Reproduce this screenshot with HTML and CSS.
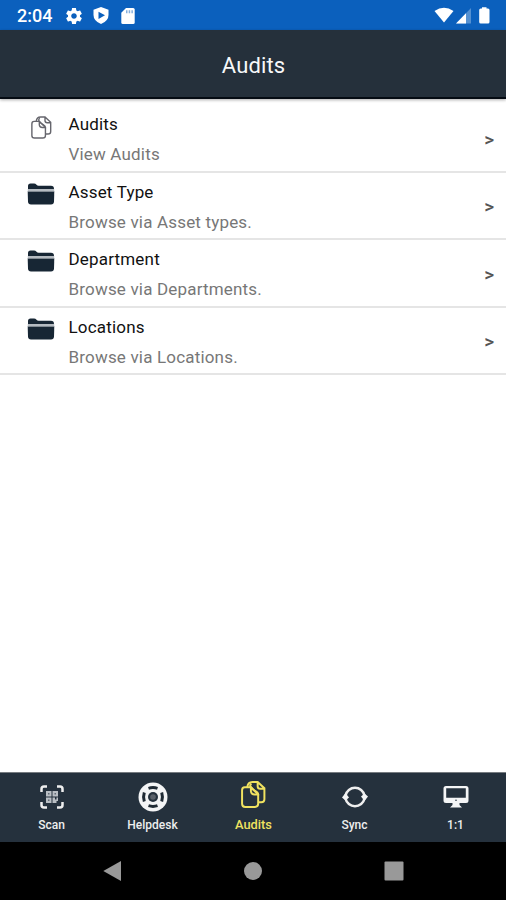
FILE: index.html
```html
<!DOCTYPE html>
<html lang="en">
<head>
<meta charset="utf-8">
<title>Audits</title>
<link rel="stylesheet" href="styles.css">
</head>
<body>
<svg class="defs" width="0" height="0" aria-hidden="true">
  <symbol id="pages" viewBox="0 0 24 26">
    <path d="M6 6 Q6.500 1 11 1 H16 L22.500 7 V17.500 Q22.500 20.500 19.500 20.500 H17 M16 1.500 V5 Q16 7.500 18.500 7.500 H22"/>
    <path d="M3.500 6 H9.500 L16.500 13 V22 Q16.500 25 13.500 25 H4 Q1 25 1 22 V9 Q1 6 3.500 6 Z"/>
    <path d="M9.500 6 Q8 4 10 2.500 M9.500 6 V10 Q10 13 13 13 H16.500 Q16.500 11 13.500 9.500 Q11.500 8.500 9.500 6"/>
  </symbol>
  <symbol id="folder" viewBox="0 0 28 22">
    <path d="M1 6 V3 Q1 .500 3.500 .500 H7 Q8.500 .500 9.500 1.700 T12 2.700 H24 Q27 2.700 27 6 Z"/>
    <path d="M.700 8.300 H27.300 L27 18.500 Q26.900 21.500 24 21.500 H4 Q1.100 21.500 1 18.500 Z"/>
    <path class="fold" d="M.800 6 H27.200 V8.500 H.800 Z"/>
  </symbol>
</svg>
<header class="status">
  <span class="clock">2:04</span>
  <svg class="gear" width="16" height="16" viewBox="2 2 20 20"><path d="M19.430 12.980c.040-.320.070-.640.070-.980s-.030-.660-.070-.980l2.110-1.650c.190-.150.240-.420.120-.640l-2-3.460c-.120-.220-.390-.300-.610-.220l-2.490 1c-.520-.400-1.080-.730-1.690-.980l-.380-2.650C14.460 2.180 14.250 2 14 2h-4c-.250 0-.460.180-.490.420l-.380 2.650c-.610.250-1.170.590-1.690.980l-2.490-1c-.230-.090-.490 0-.610.220l-2 3.460c-.130.220-.070.490.120.640l2.110 1.650c-.040.320-.070.650-.070.980s.030.660.070.980l-2.110 1.650c-.190.150-.240.420-.120.640l2 3.460c.120.220.390.300.610.220l2.490-1c.520.400 1.080.730 1.690.980l.380 2.650c.030.240.240.420.490.420h4c.250 0 .460-.180.490-.420l.380-2.650c.610-.250 1.170-.590 1.690-.980l2.490 1c.230.090.490 0 .610-.220l2-3.460c.120-.220.070-.490-.120-.640l-2.110-1.650zM12 15.500c-1.930 0-3.500-1.570-3.500-3.500s1.570-3.500 3.500-3.500 3.500 1.570 3.500 3.500-1.570 3.500-3.500 3.500z"/></svg>
  <svg class="shield" width="16" height="17" viewBox="0 0 16 17"><path d="M8 0 L15.500 2.800 V8 Q15.500 14 8 17 Q.500 14 .500 8 V2.800 Z"/><path class="cut" d="M5.500 4.700 L12 8.300 L5.500 12 Z"/></svg>
  <svg class="card" width="14" height="16" viewBox="0 0 14 16"><path d="M5 0 H12.200 Q13.700 0 13.700 1.500 V14.500 Q13.700 16 12.200 16 H1.800 Q.300 16 .300 14.500 V4.800 Z"/><path class="cut soft" d="M5 2.300h1.500v3H5zM7.700 2.300h1.500v3H7.700zM10.400 2.300h1.500v3h-1.500z"/></svg>
  <svg class="signals" width="58" height="18" viewBox="0 0 58 18"><path d="M.500 4 Q10 -2.500 19.500 4 L10 15.500 Z"/><path class="dim" d="M37 1 V16.500 H22 Z"/><path d="M32 6.200 V16.500 H22 Z"/><path d="M48 1.500 V.300 H52.500 V1.500 H54 Q55.500 1.500 55.500 3 V15 Q55.500 16.500 54 16.500 H46.700 Q45.200 16.500 45.200 15 V3 Q45.200 1.500 46.700 1.500 Z"/></svg>
</header>
<h1 class="title">Audits</h1>
<main class="list">
  <a class="row"><svg class="ico pages" width="21" height="25"><use href="#pages"/></svg><div class="copy"><h2>Audits</h2><p>View Audits</p></div><span class="arrow">&gt;</span></a>
  <a class="row"><svg class="ico folder" width="28" height="22"><use href="#folder"/></svg><div class="copy"><h2>Asset Type</h2><p>Browse via Asset types.</p></div><span class="arrow">&gt;</span></a>
  <a class="row"><svg class="ico folder" width="28" height="22"><use href="#folder"/></svg><div class="copy"><h2>Department</h2><p>Browse via Departments.</p></div><span class="arrow">&gt;</span></a>
  <a class="row"><svg class="ico folder" width="28" height="22"><use href="#folder"/></svg><div class="copy"><h2>Locations</h2><p>Browse via Locations.</p></div><span class="arrow">&gt;</span></a>
</main>
<nav class="tabs">
  <a class="tab"><svg width="24" height="24" viewBox="0 0 24 24"><path class="line" d="M1.500 7V4Q1.500 1.500 4 1.500H7M17 1.500h3Q22.500 1.500 22.500 4v3M22.500 17v3q0 2.500-2.500 2.500h-3M7 22.500H4Q1.500 22.500 1.500 20v-3"/><path class="qr" d="M6 6h5.500v5.500H6zM12.500 6H18v5.500h-5.500zM6 12.500h5.500V18H6zM12.500 12.500h2.500v2h1.500v-2H18v3.500h-1.500v2H12.500z"/><path class="hole faint" d="M8 8h1.500v1.500H8zM14.500 8H16v1.500h-1.500zM8 14.500h1.500V16H8z"/></svg><span>Scan</span></a>
  <a class="tab"><svg width="30" height="30" viewBox="0 0 30 30"><circle cx="15" cy="15" r="14.500"/><circle class="hole" cx="15" cy="15" r="5"/><circle cx="15" cy="15" r="2.800" class="grey"/><path class="slot" d="M10.500 6.300Q15 4.800 19.500 6.300M10.500 23.700Q15 25.200 19.500 23.700M6.300 10.500Q4.800 15 6.300 19.500M23.700 10.500Q25.200 15 23.700 19.500"/></svg><span>Helpdesk</span></a>
  <a class="tab active"><svg width="25" height="27"><use href="#pages"/></svg><span>Audits</span></a>
  <a class="tab"><svg width="26" height="24" viewBox="0 0 26 24"><path class="line" d="M3.500 10.500A9.700 9.700 0 0 1 22.500 10.500M22.500 13.500A9.700 9.700 0 0 1 3.500 13.500"/><path d="M0 12.500 L3.500 8 L7 12.500 L3.500 15.500ZM19 11.500 L22.500 8.500 L26 11.500 L22.500 16Z"/></svg><span>Sync</span></a>
  <a class="tab"><svg width="26" height="24" viewBox="0 0 26 24"><path fill-rule="evenodd" d="M3 1H23Q25.500 1 25.500 3.500V15.500Q25.500 18 23 18H16.500V20L19 22.500H7L9.500 20V18H3Q.500 18 .500 15.500V3.500Q.500 1 3 1ZM3.200 3.300V12.800H22.800V3.300Z"/><circle class="hole" cx="13" cy="15.300" r=".8"/></svg><span>1:1</span></a>
</nav>
<footer class="system">
  <svg width="20" height="22" viewBox="0 0 20 22"><path d="M.300 11 L18 1 V21Z"/></svg>
  <svg width="20" height="20" viewBox="0 0 20 20"><circle cx="10" cy="10" r="9"/></svg>
  <svg width="20" height="20" viewBox="0 0 20 20"><rect x=".5" y=".5" width="19" height="19" rx="1"/></svg>
</footer>
</body>
</html>
```
FILE: styles.css
```css
* { box-sizing: border-box; margin: 0; padding: 0; }
body { width: 506px; height: 900px; display: flex; flex-direction: column; overflow: hidden; background: #fff; font-family: Roboto, "Liberation Sans", sans-serif; }
svg { display: block; flex: none; overflow: visible; }
.defs { position: absolute; }
.status { height: 30px; flex: none; display: flex; align-items: center; padding: 1px 14px 0 17px; background: #0b60bd; color: #fff; fill: #fff; }
.clock { width: 35px; font-size: 18px; line-height: 28px; font-weight: 500; }
.gear { margin-left: 14px; }
.shield { margin-left: 11px; }
.card { margin-left: 12px; }
.signals { margin-left: auto; }
.cut { fill: #0b60bd; }
.soft { opacity: .5; }
.dim { opacity: .3; }
.title { height: 69px; flex: none; background: #25303b; border-bottom: 2px solid #050b13; color: #f7f8f9; font-size: 22px; line-height: 71px; font-weight: 400; text-align: center; letter-spacing: .1px; text-indent: 1px; box-shadow: 0 1px 3px #0005; }
.list { flex: 1; padding-top: 6px; }
.row { height: 67.5px; display: flex; align-items: flex-start; padding: 0 11px 0 27px; border-bottom: 2px solid #e5e5e5; }
.ico { margin-top: 10px; fill: #172634; }
.ico.pages { margin: 10px 3px 0 4px; fill: none; stroke: #66666d; stroke-width: 1.6; }
.fold { fill: #b5bbc1; }
.copy { margin-left: 13.5px; flex: 1; letter-spacing: .18px; }
.copy h2 { margin-top: 4px; font-size: 17px; line-height: 30px; font-weight: 400; color: #111; }
.copy p { font-size: 17px; line-height: 30px; color: #777; }
.arrow { align-self: center; margin: 4px 1px 0 0; font-size: 19px; line-height: 20px; font-weight: 500; color: #555; }
.tabs { height: 70px; flex: none; display: grid; grid-template-columns: repeat(5, 1fr); padding-left: 1px; background: #25313d; border-top: 1px solid #767b80; }
.tab { display: grid; grid-template-rows: 48px 18px; align-content: start; justify-items: center; align-items: center; font-size: 12px; line-height: 16px; font-weight: 500; color: #eee; fill: #f4f5f6; }
.tab span { position: relative; top: -5px; }
.line { fill: none; stroke: #eee; stroke-width: 2.5; }
.qr { fill: #b9bec3; }
.hole { fill: #25313d; }
.faint { opacity: .6; }
.grey { fill: #596069; }
.slot { fill: none; stroke: #202b35; stroke-width: 3; }
.active { color: #f0e260; fill: none; stroke: #f0e260; stroke-width: 1.9; font-size: 12.8px; }
.active span { stroke: none; }
.active svg { margin-top: -6px; }
.system { height: 58px; flex: none; display: flex; align-items: center; justify-content: space-between; padding: 0 102.500px; background: #000; fill: #999; }
```
